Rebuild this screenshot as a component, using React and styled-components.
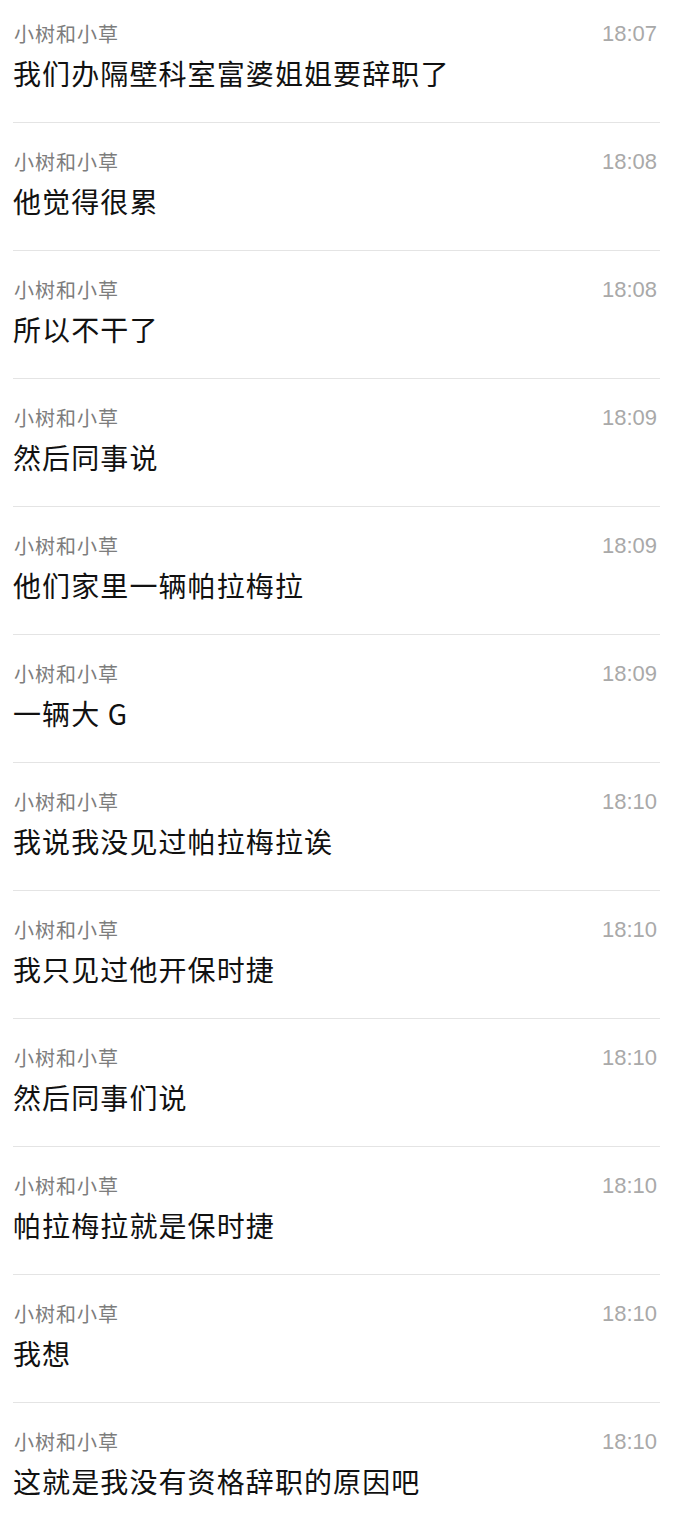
import React from "react";
import styled, { createGlobalStyle } from "styled-components";

const GlobalStyle = createGlobalStyle`
  html, body {
    margin: 0;
    padding: 0;
    background: #ffffff;
  }
  body {
    font-family: "Noto Sans CJK SC", "Noto Sans", sans-serif;
    overflow: hidden;
  }
`;

const List = styled.div`
  display: flex;
  flex-direction: column;
  background: #fff;
`;

const Row = styled.div`
  box-sizing: border-box;
  height: ${(p) => (p.$first ? 123 : 128)}px;
  margin: 0 30px 0 13px;
  padding-top: ${(p) => (p.$first ? 18 : 23)}px;
  border-bottom: 1px solid #e4e4e4;
  display: flex;
  flex-direction: column;
`;

const Header = styled.div`
  display: flex;
  justify-content: space-between;
  align-items: center;
  height: 32px;
`;

const Name = styled.span`
  font-family: "Noto Sans CJK SC", sans-serif;
  font-size: 20px;
  letter-spacing: 1px;
  line-height: 32px;
  color: #7d7d7d;
  padding-left: 1px;
`;

const Time = styled.span`
  font-family: "Liberation Sans", "Noto Sans", sans-serif;
  font-size: 22px;
  line-height: 32px;
  color: #a9a9a9;
  padding-right: 3px;
`;

const Message = styled.div`
  margin-top: 3px;
  font-family: "Noto Sans CJK SC", sans-serif;
  font-size: 28px;
  letter-spacing: 1.1px;
  line-height: 40px;
  color: #111111;
  white-space: nowrap;
`;

const messages = [
  ["18:07", "我们办隔壁科室富婆姐姐要辞职了"],
  ["18:08", "他觉得很累"],
  ["18:08", "所以不干了"],
  ["18:09", "然后同事说"],
  ["18:09", "他们家里一辆帕拉梅拉"],
  ["18:09", "一辆大 G"],
  ["18:10", "我说我没见过帕拉梅拉诶"],
  ["18:10", "我只见过他开保时捷"],
  ["18:10", "然后同事们说"],
  ["18:10", "帕拉梅拉就是保时捷"],
  ["18:10", "我想"],
  ["18:10", "这就是我没有资格辞职的原因吧"],
];

export default function App() {
  return (
    <>
      <GlobalStyle />
      <List>
        {messages.map(([time, text], i) => (
          <Row key={i} $first={i === 0}>
            <Header>
              <Name>小树和小草</Name>
              <Time>{time}</Time>
            </Header>
            <Message>{text}</Message>
          </Row>
        ))}
      </List>
    </>
  );
}
